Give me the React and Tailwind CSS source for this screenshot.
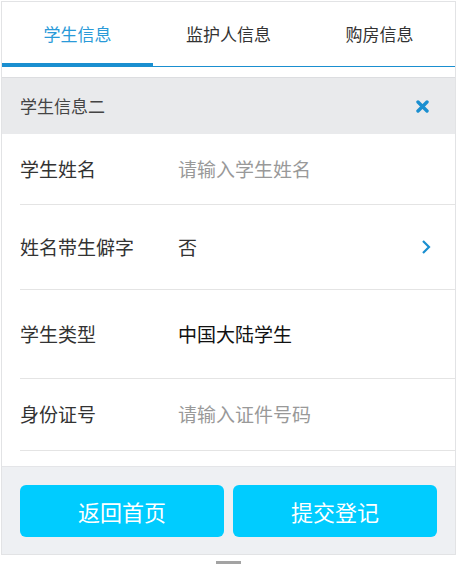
import React, { useState } from "react";

const tabs = ["学生信息", "监护人信息", "购房信息"];

const rows = [
  { label: "学生姓名", placeholder: "请输入学生姓名", h: "h-[71px]" },
  { label: "姓名带生僻字", value: "否", arrow: true, h: "h-[85px]" },
  { label: "学生类型", value: "中国大陆学生", dark: true, h: "h-[89px]" },
  { label: "身份证号", placeholder: "请输入证件号码", h: "h-[72px]" },
];

export default function App() {
  const [active, setActive] = useState(0);

  return (
    <div
      className="pt-px pl-px bg-white min-h-screen"
      style={{ fontFamily: '"Noto Sans CJK SC", "Microsoft YaHei", sans-serif' }}
    >
      <div className="w-[455px] border border-[#e2e3e5] bg-white">
        {/* 顶部标签 */}
        <div className="flex border-b border-[#1a8fd0]">
          {tabs.map((t, i) => (
            <button
              key={t}
              onClick={() => setActive(i)}
              className={`flex-1 h-[64px] flex items-center justify-center text-[17px] ${
                active === i
                  ? "text-[#2a9ad8] border-b-[3px] border-[#1a8fd0] pt-[3px]"
                  : "text-[#333]"
              }`}
            >
              {t}
            </button>
          ))}
        </div>

        <div className="h-[10px]" />

        <div className="h-[57px] border-t border-[#dcdde0] bg-[#e9eaec] flex items-center justify-between pl-[18px] pr-[26px]">
          <span className="text-[17px] text-[#444]">学生信息二</span>
          <svg width="13" height="13" viewBox="0 0 13 13">
            <path
              d="M2 2 L11 11 M11 2 L2 11"
              stroke="#1a8fd0"
              strokeWidth="3.4"
              strokeLinecap="round"
            />
          </svg>
        </div>

        {rows.map((r) => (
          <div
            key={r.label}
            className={`ml-[18px] ${r.h} border-b border-[#e4e4e4] flex items-center text-[19px]`}
          >
            <span className="w-[158px] text-[#333]">{r.label}</span>
            {r.placeholder ? (
              <input
                className="flex-1 outline-none placeholder-[#999] text-[#333] bg-transparent"
                placeholder={r.placeholder}
              />
            ) : (
              <span className={`flex-1 ${r.dark ? "text-[#111]" : "text-[#333]"}`}>
                {r.value}
              </span>
            )}
            {r.arrow && (
              <svg width="10" height="16" viewBox="0 0 10 16" className="mr-[24px]">
                <path
                  d="M2 2 L8 8 L2 14"
                  fill="none"
                  stroke="#1a8fd0"
                  strokeWidth="2.2"
                />
              </svg>
            )}
          </div>
        ))}

        <div className="h-[15px]" />

        <div className="bg-[#eef0f3] border-t border-[#e4e5e8] pt-[18px] pb-[17px] px-[18px] flex gap-[9px]">
          <button className="flex-1 h-[52px] rounded-[6px] bg-[#00ccff] text-white text-[22px]">
            返回首页
          </button>
          <button className="flex-1 h-[52px] rounded-[6px] bg-[#00ccff] text-white text-[22px]">
            提交登记
          </button>
        </div>
      </div>
      <div className="ml-[215px] mt-[6px] w-[25px] h-[3px] bg-[#a3a3a3]" />
    </div>
  );
}
